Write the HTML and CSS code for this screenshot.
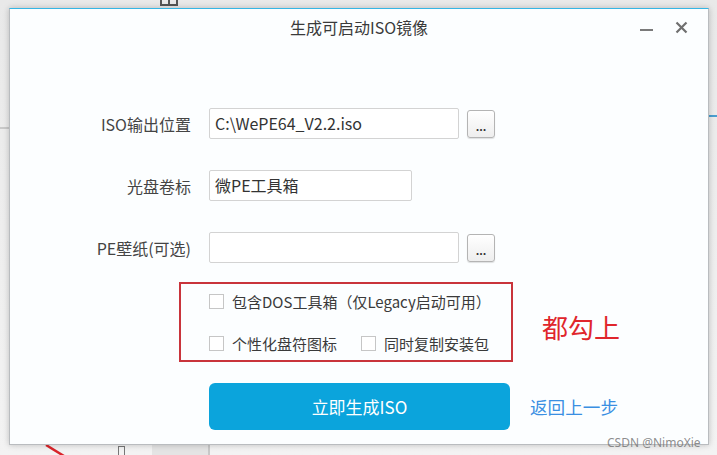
FILE: index.html
```html
<!DOCTYPE html>
<html lang="zh-CN">
<head>
    <meta charset="UTF-8">
    <meta name="viewport" content="width=device-width, initial-scale=1.0">
    <title>生成可启动ISO镜像</title>
    <link rel="stylesheet" href="styles.css">
</head>
<body>
    <div class="desktop">
        <!-- 背后窗口的残影 -->
        <span class="bg-icon top-icon"></span>
        <span class="bg-line right-line"></span>
        <span class="bg-line left-line"></span>
        <svg class="bg-arrow" width="24" height="12" viewBox="0 0 24 12"><path d="M2 1 L20 12" stroke="#d9252b" stroke-width="2.5" fill="none"/></svg>
        <span class="bg-icon bottom-icon"></span>
        <span class="bg-panel"></span>

        <div class="dialog">
            <div class="titlebar">
                <span class="title">生成可启动ISO镜像</span>
                <div class="win-ctrls">
                    <span class="btn-min"></span>
                    <svg class="btn-close" width="13" height="13" viewBox="0 0 13 13">
                        <path d="M1.5 1.5 L11.5 11.5 M11.5 1.5 L1.5 11.5" stroke="#6f6f6f" stroke-width="2.2" fill="none"/>
                    </svg>
                </div>
            </div>

            <div class="form">
                <div class="row">
                    <span class="label">ISO输出位置</span>
                    <div class="field wide">C:\WePE64_V2.2.iso</div>
                    <span class="browse">...</span>
                </div>
                <div class="row">
                    <span class="label">光盘卷标</span>
                    <div class="field short">微PE工具箱</div>
                </div>
                <div class="row">
                    <span class="label">PE壁纸(可选)</span>
                    <div class="field wide"></div>
                    <span class="browse">...</span>
                </div>
            </div>

            <div class="options-row">
                <div class="options">
                    <div class="opt-line">
                        <label class="check"><span class="box"></span>包含DOS工具箱（仅Legacy启动可用）</label>
                    </div>
                    <div class="opt-line">
                        <label class="check"><span class="box"></span>个性化盘符图标</label>
                        <label class="check"><span class="box"></span>同时复制安装包</label>
                    </div>
                </div>
                <span class="note">都勾上</span>
            </div>

            <div class="actions">
                <span class="primary">立即生成ISO</span>
                <span class="link">返回上一步</span>
            </div>
        </div>

        <span class="watermark">CSDN @NimoXie</span>
    </div>
</body>
</html>
```

FILE: styles.css
```css
    * {
        box-sizing: border-box;
    }

    body {
        margin: 0;
        background: #eeeeee;
        font-family: "Noto Sans CJK SC", "Noto Sans", sans-serif;
        color: #333;
    }

    .desktop {
        position: relative;
        width: 717px;
        height: 455px;
        padding: 8px 0 0 9px;
        overflow: hidden;
        background: linear-gradient(#e9e9e9, #f3f3f3);
    }

    /* 背景窗口碎片 */
    .bg-icon {
        position: absolute;
        border: 2px solid #555;
    }

    .top-icon {
        left: 160px;
        top: -8px;
        width: 18px;
        height: 14px;
        border-top: none;
        background: linear-gradient(90deg, transparent 6px, #555 6px, #555 8px, transparent 8px);
    }

    .bottom-icon {
        left: 118px;
        top: 446px;
        width: 7px;
        height: 12px;
        border-width: 1px;
        border-color: #777;
    }

    .bg-panel {
        position: absolute;
        left: 152px;
        top: 445px;
        width: 58px;
        height: 10px;
        background: #e4e4e4;
        border-right: 2px solid #c8c8c8;
    }

    .bg-line {
        position: absolute;
        height: 2px;
    }

    .right-line {
        left: 709px;
        top: 115px;
        width: 8px;
        background: #4b9fd0;
    }

    .left-line {
        left: 0;
        top: 127px;
        width: 9px;
        background: #c9c9c9;
    }

    .bg-arrow {
        position: absolute;
        left: 44px;
        top: 444px;
    }

    /* 对话框 */
    .dialog {
        position: relative;
        z-index: 1;
        width: 700px;
        height: 437px;
        background: #fcfeff;
        border: 1px solid #b9bcbf;
        border-top: 1px solid #35b5e4;
        box-shadow: 0 0 6px rgba(0,0,0,0.22);
    }

    .titlebar {
        position: relative;
        height: 37px;
        line-height: 36px;
        text-align: center;
    }

    .title {
        font-size: 16px;
        color: #3a3a3a;
    }

    .win-ctrls {
        position: absolute;
        right: 20px;
        top: 12px;
        display: flex;
        align-items: center;
        gap: 22px;
        height: 13px;
    }

    .btn-min {
        width: 13px;
        height: 2px;
        margin-top: 5px;
        background: #7a7a7a;
    }

    .btn-close {
        display: block;
    }

    .form {
        display: flex;
        flex-direction: column;
        gap: 31px;
        margin-top: 62px;
    }

    .row {
        display: flex;
        align-items: center;
        height: 31px;
    }

    .label {
        width: 181px;
        margin-right: 18px;
        text-align: right;
        font-size: 16px;
        color: #444;
    }

    .field {
        height: 31px;
        line-height: 29px;
        padding-left: 5px;
        border: 1px solid #d3d3d3;
        border-radius: 2px;
        background: #fff;
        font-size: 16px;
        color: #333;
    }

    .wide {
        width: 250px;
    }

    .short {
        width: 203px;
    }

    .browse {
        width: 28px;
        height: 28px;
        margin-left: 8px;
        border: 1px solid #b4b4b4;
        border-radius: 3px;
        background: linear-gradient(#ffffff, #eeeeee);
        box-shadow: 0 1px 1px rgba(0,0,0,0.12);
        text-align: center;
        font-size: 11px;
        font-weight: bold;
        line-height: 30px;
        color: #333;
    }

    .options-row {
        display: flex;
        align-items: center;
        margin-top: 19px;
        margin-left: 169px;
    }

    .options {
        display: flex;
        flex-direction: column;
        gap: 20px;
        width: 334px;
        height: 80px;
        padding: 6px 0 0 28px;
        border: 2px solid #c9343b;
    }

    .opt-line {
        display: flex;
        align-items: center;
        gap: 24px;
        height: 22px;
    }

    .check {
        display: flex;
        align-items: center;
        font-size: 15px;
        color: #3a3a3a;
    }

    .box {
        width: 15px;
        height: 15px;
        margin-right: 8px;
        border: 1px solid #c6c6c6;
        background: #fff;
    }

    .note {
        margin-left: 29px;
        margin-top: 8px;
        font-size: 26px;
        color: #e0262c;
    }

    .actions {
        display: flex;
        align-items: center;
        margin-top: 21px;
        margin-left: 199px;
    }

    .primary {
        width: 301px;
        height: 47px;
        line-height: 47px;
        border-radius: 6px;
        background: #0ba4dc;
        color: #fff;
        font-size: 17px;
        text-align: center;
    }

    .link {
        margin-left: 20px;
        font-size: 17.6px;
        color: #3a8fe2;
    }

    .watermark {
        position: absolute;
        z-index: 2;
        left: 607px;
        top: 434px;
        font-family: "Noto Sans", sans-serif;
        font-size: 12px;
        color: rgba(120,120,120,0.85);
    }
```
